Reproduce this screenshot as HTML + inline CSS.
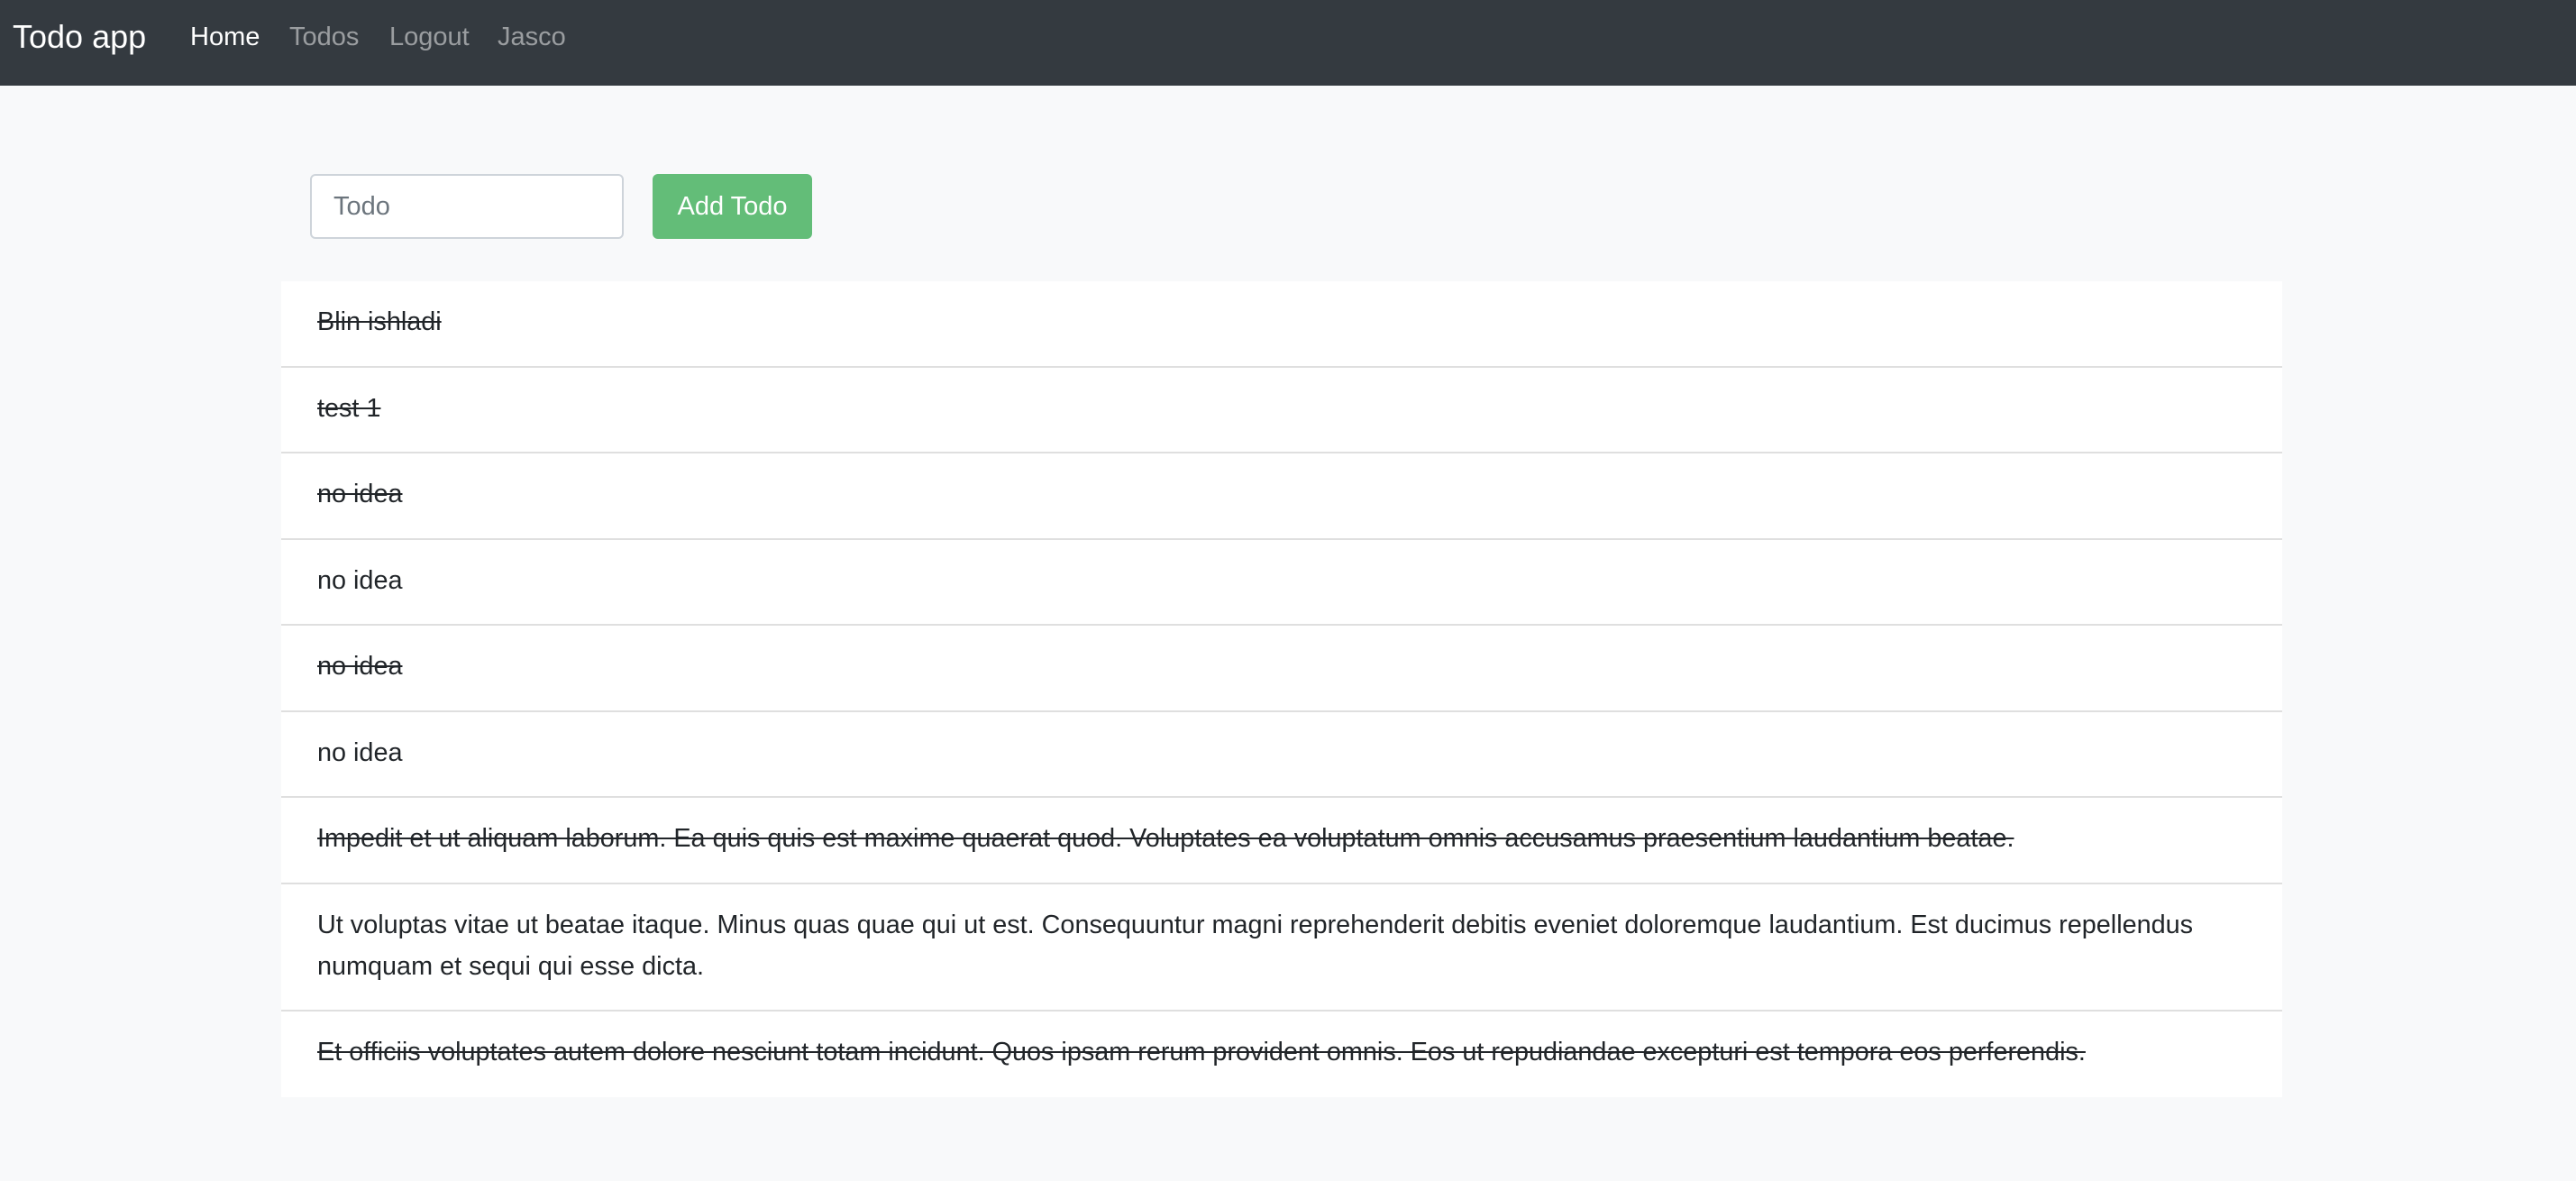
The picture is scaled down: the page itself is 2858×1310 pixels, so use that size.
<!DOCTYPE html>
<html><head><meta charset="utf-8"><style>
*{box-sizing:border-box;margin:0;padding:0}
body{width:2858px;height:1310px;background:#f8f9fa;font-family:"Liberation Sans",sans-serif;color:#212529;overflow:hidden}
.nav{height:95px;background:#343a40;position:relative}
.nav span{position:absolute;top:0;line-height:82px;font-size:29px;color:rgba(255,255,255,.5)}
.nav .brand{left:14px;font-size:36px;color:#fff}
.nav .act{color:#fff}
.inp{position:absolute;left:344px;top:193px;width:348px;height:72px;border:2px solid #ced4da;border-radius:6px;background:#fff;font-size:29px;color:#6c757d;padding-left:24px;line-height:68px}
.btn{position:absolute;left:724px;top:193px;width:177px;height:72px;border-radius:6px;background:#63bd78;color:#fff;font-size:29px;text-align:center;line-height:72px}
.list{position:absolute;left:312px;top:312px;width:2220px;background:#fff}
.item{padding:0 40px;height:95.5px;line-height:46px;padding-top:22px;border-bottom:2px solid #dfdfdf;font-size:28.8px;white-space:nowrap}
.item.two{height:141px}
.item:last-child{border-bottom:none}
.s{text-decoration:line-through}
</style></head><body>
<div class="nav">
<span class="brand">Todo app</span>
<span class="act" style="left:211px">Home</span>
<span style="left:321px">Todos</span>
<span style="left:432px">Logout</span>
<span style="left:552px">Jasco</span>
</div>
<div class="inp">Todo</div>
<div class="btn">Add Todo</div>
<div class="list">
<div class="item s">Blin ishladi</div>
<div class="item s">test 1</div>
<div class="item s">no idea</div>
<div class="item">no idea</div>
<div class="item s">no idea</div>
<div class="item">no idea</div>
<div class="item s">Impedit et ut aliquam laborum. Ea quis quis est maxime quaerat quod. Voluptates ea voluptatum omnis accusamus praesentium laudantium beatae.</div>
<div class="item two">Ut voluptas vitae ut beatae itaque. Minus quas quae qui ut est. Consequuntur magni reprehenderit debitis eveniet doloremque laudantium. Est ducimus repellendus<br>numquam et sequi qui esse dicta.</div>
<div class="item s">Et officiis voluptates autem dolore nesciunt totam incidunt. Quos ipsam rerum provident omnis. Eos ut repudiandae excepturi est tempora eos perferendis.</div>
</div>
</body></html>
